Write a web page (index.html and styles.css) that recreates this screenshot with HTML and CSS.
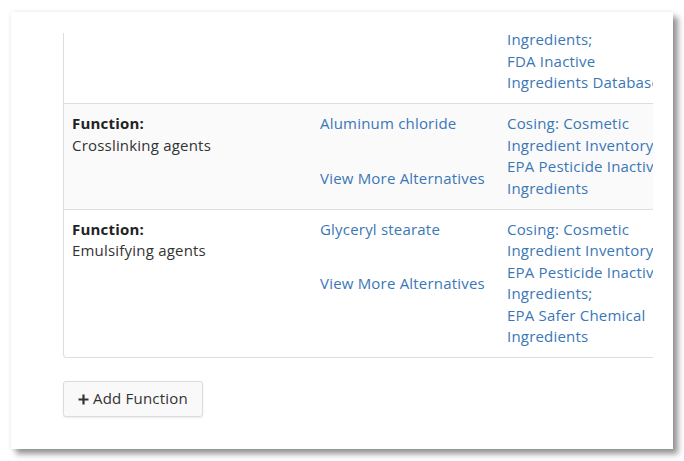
FILE: index.html
```html
<!DOCTYPE html>
<html>
<head>
<meta charset="utf-8">
<link rel="stylesheet" href="styles.css">
</head>
<body>
<div class="card">
  <div class="viewport">
    <div class="table">
      <div class="row">
        <div class="cell c1"></div>
        <div class="cell c2"></div>
        <div class="cell c3"><a class="link">Ingredients;</a><a class="link">FDA Inactive Ingredients Database</a></div>
        <div class="cell c4"></div>
      </div>
      <div class="row shaded">
        <div class="cell c1"><div class="label">Function:</div><div>Crosslinking agents</div></div>
        <div class="cell c2"><a class="link">Aluminum chloride</a><a class="link more">View More Alternatives</a></div>
        <div class="cell c3"><a class="link">Cosing: Cosmetic Ingredient Inventory;</a><a class="link">EPA Pesticide Inactive Ingredients</a></div>
        <div class="cell c4"></div>
      </div>
      <div class="row">
        <div class="cell c1"><div class="label">Function:</div><div>Emulsifying agents</div></div>
        <div class="cell c2"><a class="link">Glyceryl stearate</a><a class="link more">View More Alternatives</a></div>
        <div class="cell c3"><a class="link">Cosing: Cosmetic Ingredient Inventory;</a><a class="link">EPA Pesticide Inactive Ingredients;</a><a class="link">EPA Safer Chemical Ingredients</a></div>
        <div class="cell c4"></div>
      </div>
    </div>
  </div>
  <button class="btn" type="button"><svg class="plus" width="11" height="11" viewBox="0 0 11 11"><path d="M5.5 0.5v10M0.5 5.5h10" stroke="#333" stroke-width="2.2" fill="none"/></svg><span>Add Function</span></button>
</div>
</body>
</html>
```

FILE: styles.css
```css
html, body {
  margin: 0;
  padding: 0;
  background: #ffffff;
}
body {
  min-height: 461px;
  font-family: "Open Sans", "DejaVu Sans", sans-serif;
  font-size: 15px;
  line-height: 21.5px;
  letter-spacing: 0.2px;
  color: #333333;
}
.card {
  box-sizing: border-box;
  margin: 12px 0 0 11px;
  width: 662px;
  height: 437px;
  background: #ffffff;
  padding: 21px 20px 0 52px;
  box-shadow: 5px 5px 6px rgba(0, 0, 0, 0.42), 0 0 5px rgba(0, 0, 0, 0.08);
  overflow: hidden;
}
.viewport {
  width: 590px;
  overflow: hidden;
}
.table {
  width: 780px;
  margin-top: -13px;
  border: 1px solid #dddddd;
  border-top: 0;
  border-radius: 0 0 4px 4px;
}
.row {
  display: grid;
  grid-template-columns: 248px 187px 183px 1fr;
  border-top: 1px solid #dddddd;
}
.row:first-child {
  border-top: 0;
}
.row.shaded {
  background: #fafafa;
}
.cell {
  padding: 9px 8px 9.5px 8px;
}
.c3 {
  width: 167px;
}
.label {
  font-weight: 700;
  color: #222222;
}
.link {
  display: block;
  color: #3a77b6;
  text-decoration: none;
}
.c2 .more {
  margin-top: 33px;
}
.btn {
  display: flex;
  align-items: center;
  gap: 4px;
  margin-top: 23px;
  height: 36px;
  padding: 0 14px 0 14px;
  border: 1px solid #dcdcdc;
  border-radius: 3px;
  background: #f9f9f9;
  box-shadow: 0 1px 2px rgba(0, 0, 0, 0.08);
  font-family: "Open Sans", "DejaVu Sans", sans-serif;
  font-size: 15px;
  line-height: 21.5px;
  letter-spacing: 0.2px;
  color: #333333;
}
.plus {
  display: block;
}
```
